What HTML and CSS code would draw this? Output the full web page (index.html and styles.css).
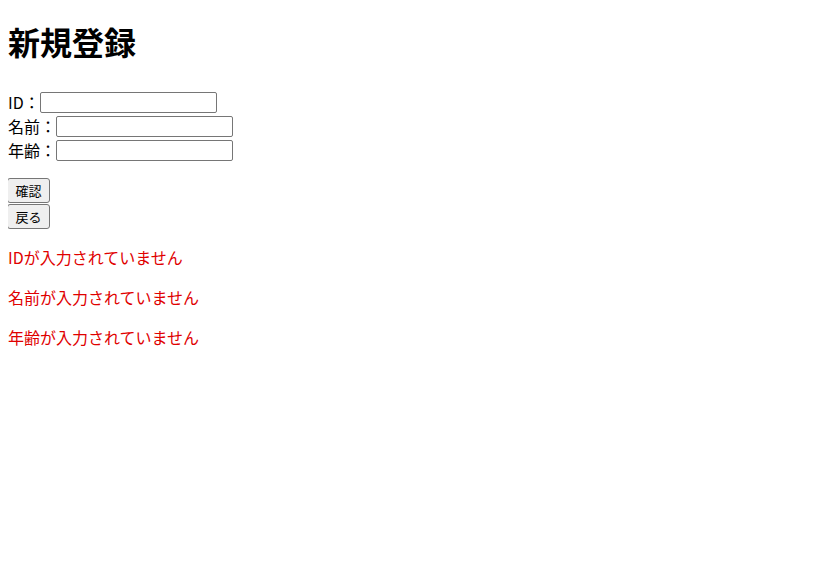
FILE: index.html
```html
<!DOCTYPE html>
<html lang="ja">
<head>
<meta charset="utf-8">
<title>新規登録</title>
<link rel="stylesheet" href="styles.css">
</head>
<body>
<h1 class="title">新規登録</h1>
<form class="form">
<div class="row">ID：<input class="field" type="text"></div>
<div class="row">名前：<input class="field" type="text"></div>
<div class="row">年齢：<input class="field" type="text"></div>
<div class="buttons">
<button class="btn" type="button">確認</button>
<button class="btn" type="button">戻る</button>
</div>
</form>
<div class="errors">
<p class="error">IDが入力されていません</p>
<p class="error">名前が入力されていません</p>
<p class="error">年齢が入力されていません</p>
</div>
</body>
</html>
```
FILE: styles.css
```css
body {
  margin: 8px;
  font-family: "Noto Sans CJK JP", "Noto Sans", sans-serif;
  font-size: 16px;
  line-height: 1.5;
  color: #000;
  background: #fff;
}
.title {
  font-size: 32px;
  font-weight: bold;
  margin: 9px 0 25px;
  line-height: 1.5;
}
.form {
  margin: 0;
}
.row {
  height: 24px;
  display: flex;
  align-items: center;
}
.field {
  width: 177px;
  height: 21px;
  box-sizing: border-box;
  border: 1px solid #767676;
  border-radius: 2px;
  padding: 1px 2px;
  margin: 0;
  font-size: 13px;
}
.buttons {
  margin-top: 16px;
  display: flex;
  flex-direction: column;
  align-items: flex-start;
  gap: 1px;
}
.btn {
  font-family: "Noto Sans CJK JP", sans-serif;
  font-size: 13px;
  width: 43px;
  height: 25px;
  padding: 1px 0;
  margin: 0 0 0 -1px;
  background: #efefef;
  border: 1px solid #767676;
  border-radius: 3px;
  color: #000;
  line-height: 1;
}
.errors {
  margin-top: 16px;
}
.error {
  color: #e00000;
  margin: 0 0 16px;
  line-height: 24px;
}
```
